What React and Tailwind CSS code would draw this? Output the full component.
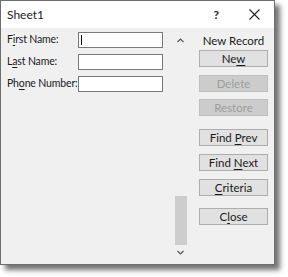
import React from 'react';

const font = { fontFamily: 'Lato, "Noto Sans", sans-serif' };

const Key = ({ children }) => <span className="underline underline-offset-2">{children}</span>;

const Field = ({ label, caret }) => (
  <div className="flex items-center h-[16px]">
    <div className="w-[77px] pl-[6px] text-[10.5px] tracking-[-0.15px] text-[#1a1a1a] whitespace-nowrap">{label}</div>
    <div className="w-[85px] h-[16px] bg-white border border-[#7a7a7a] relative">
      {caret && <div className="absolute left-[2px] top-[2px] w-px h-[10px] bg-black" />}
    </div>
  </div>
);

const Btn = ({ children, disabled, mt }) => (
  <div
    className={`${mt} w-[69px] h-[17px] flex items-center justify-center text-[11.5px] border ${
      disabled ? 'bg-[#cccccc] border-[#bfbfbf] text-[#9e9e9e]' : 'bg-[#e1e1e1] border-[#adadad] text-[#1a1a1a]'
    }`}
  >
    <span>{children}</span>
  </div>
);

export default function App() {
  return (
    <div className="w-[288px] h-[277px] bg-white" style={font}>
      <div className="w-[275px] h-[265px] border border-[#6e6e6e] flex flex-col shadow-[5px_5px_5px_rgba(0,0,0,0.55)]">
        {/* Title bar */}
        <div className="h-[27px] bg-white flex items-center shrink-0">
          <span className="ml-[6px] text-[12px] text-[#222]">Sheet1</span>
          <span className="ml-auto mr-[30px] text-[12px] font-bold text-[#222]">?</span>
          <svg width="11" height="11" viewBox="0 0 11 11" className="mr-[14px]">
            <path d="M0.5 0.5L10.5 10.5M10.5 0.5L0.5 10.5" stroke="#222" strokeWidth="1.1" />
          </svg>
        </div>

        {/* Body */}
        <div className="flex-1 bg-[#f0f0f0] flex">
          <div className="w-[173px] pt-[4px] flex flex-col gap-[6px]">
            <Field label={<>F<Key>i</Key>rst Name:</>} caret />
            <Field label={<>L<Key>a</Key>st Name:</>} />
            <Field label={<>Ph<Key>o</Key>ne Number:</>} />
          </div>

          {/* Scrollbar */}
          <div className="w-[13px] flex flex-col items-center">
            <svg width="7" height="5" viewBox="0 0 7 5" className="mt-[10px]">
              <path d="M0.5 4L3.5 1L6.5 4" stroke="#555" strokeWidth="1.2" fill="none" />
            </svg>
            <div className="mt-auto w-[12px] h-[49px] bg-[#cdcdcd]" />
            <svg width="7" height="5" viewBox="0 0 7 5" className="mt-[5px] mb-[9px]">
              <path d="M0.5 1L3.5 4L6.5 1" stroke="#555" strokeWidth="1.2" fill="none" />
            </svg>
          </div>

          {/* Buttons */}
          <div className="ml-[12px] flex flex-col">
            <div className="mt-[4px] w-[69px] h-[15px] text-center text-[11.5px] text-[#1a1a1a]">New Record</div>
            <Btn mt="mt-[3px]">Ne<Key>w</Key></Btn>
            <Btn mt="mt-[8px]" disabled>Delete</Btn>
            <Btn mt="mt-[7px]" disabled>Restore</Btn>
            <Btn mt="mt-[13px]">Find <Key>P</Key>rev</Btn>
            <Btn mt="mt-[8px]">Find <Key>N</Key>ext</Btn>
            <Btn mt="mt-[8px]"><Key>C</Key>riteria</Btn>
            <Btn mt="mt-[12px]">C<Key>l</Key>ose</Btn>
          </div>
        </div>
      </div>
    </div>
  );
}
